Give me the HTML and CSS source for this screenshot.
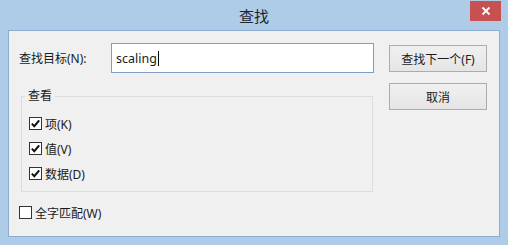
FILE: index.html
```html
<!DOCTYPE html>
<html lang="zh-CN">
<head>
    <meta charset="UTF-8">
    <title>查找</title>
    <link rel="stylesheet" href="styles.css">
</head>
<body>
    <div class="window">
        <div class="titlebar">
            <span class="title">查找</span>
            <button class="close-btn">
                <svg viewBox="0 0 10 10" width="10" height="10">
                    <path d="M1.5 1.5L8.5 8.5M8.5 1.5L1.5 8.5" stroke="#fff" stroke-width="1.8" fill="none"/>
                </svg>
            </button>
        </div>

        <div class="client">
            <div class="main">
                <div class="find-row">
                    <label class="find-label">查找目标(N):</label>
                    <div class="textbox">scaling<span class="caret"></span></div>
                </div>

                <fieldset class="group">
                    <legend>查看</legend>
                    <div class="check">
                        <span class="box">
                            <svg viewBox="0 0 11 11"><path d="M1.8 5.6L4.3 8.2L9.2 2.4" stroke="#111" stroke-width="2" fill="none"/></svg>
                        </span>
                        项(K)
                    </div>
                    <div class="check">
                        <span class="box">
                            <svg viewBox="0 0 11 11"><path d="M1.8 5.6L4.3 8.2L9.2 2.4" stroke="#111" stroke-width="2" fill="none"/></svg>
                        </span>
                        值(V)
                    </div>
                    <div class="check">
                        <span class="box">
                            <svg viewBox="0 0 11 11"><path d="M1.8 5.6L4.3 8.2L9.2 2.4" stroke="#111" stroke-width="2" fill="none"/></svg>
                        </span>
                        数据(D)
                    </div>
                </fieldset>

                <div class="check whole-word">
                    <span class="box"></span>
                    全字匹配(W)
                </div>
            </div>

            <div class="buttons">
                <button class="btn">查找下一个(F)</button>
                <button class="btn">取消</button>
            </div>
        </div>
    </div>
</body>
</html>
```

FILE: styles.css
```css
body {
    margin: 0;
    width: 508px;
    height: 245px;
    font-family: "Noto Sans", "Noto Sans CJK SC", sans-serif;
    font-size: 12px;
    color: #1a1a1a;
    overflow: hidden;
}

.window {
    width: 508px;
    height: 245px;
    box-sizing: border-box;
    background: #aecbe8;
    padding: 0 8px 8px;
    display: flex;
    flex-direction: column;
}

.titlebar {
    position: relative;
    height: 30px;
    display: flex;
    align-items: center;
    justify-content: center;
}

.title {
    font-size: 15px;
    color: #1b2633;
    margin-top: 1px;
}

.close-btn {
    position: absolute;
    top: 1px;
    right: -1px;
    width: 31px;
    height: 20px;
    padding: 0;
    border: none;
    background: #c75050;
    display: flex;
    align-items: center;
    justify-content: center;
}

.client {
    flex: 1;
    display: flex;
    align-items: flex-start;
    background: #f0f0f0;
    border: 1px solid #8eacd0;
    padding: 12px 0 0 10px;
}

.main {
    width: 355px;
}

.find-row {
    display: flex;
    align-items: center;
    height: 30px;
}

.find-label {
    width: 92px;
}

.textbox {
    flex: 1;
    height: 30px;
    box-sizing: border-box;
    border: 1px solid #7f9ec2;
    background: #fff;
    padding-left: 4px;
    font-size: 12.5px;
    display: flex;
    align-items: center;
}

.caret {
    display: inline-block;
    width: 1px;
    height: 15px;
    background: #000;
    margin-left: 1px;
}

.group {
    margin: 15px 1px 0 2px;
    padding: 7px 0 5px 7px;
    border: 1px solid #dcdcdc;
    min-width: 0;
}

.group legend {
    padding: 0 3px;
    margin-left: -4px;
    line-height: 16px;
}

.check {
    display: flex;
    align-items: center;
    height: 25px;
}

.box {
    width: 13px;
    height: 13px;
    box-sizing: border-box;
    border: 1px solid #333;
    background: #fff;
    margin-right: 3px;
    display: flex;
    align-items: center;
    justify-content: center;
}

.box svg {
    width: 11px;
    height: 11px;
}

.whole-word {
    margin-top: 8px;
}

.buttons {
    margin: 2px 0 0 15px;
    display: flex;
    flex-direction: column;
    gap: 11px;
}

.btn {
    width: 98px;
    height: 27px;
    padding: 0;
    border: 1px solid #acacac;
    background: linear-gradient(#f0f0f0, #e5e5e5);
    font-family: inherit;
    font-size: 12px;
    color: #1a1a1a;
}
```
